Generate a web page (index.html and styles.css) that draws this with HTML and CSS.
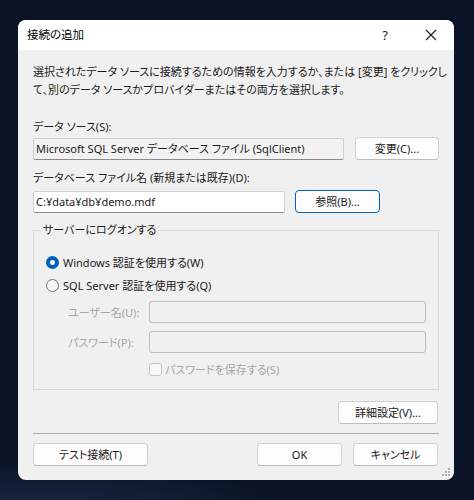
FILE: index.html
```html
<!DOCTYPE html>
<html lang="ja">
<head>
<meta charset="utf-8">
<title>接続の追加</title>
<link rel="stylesheet" href="styles.css">
</head>
<body>
<div class="dialog">
  <div class="titlebar">
    <span class="title">接続の追加</span>
    <span class="tb-btn help">?</span>
    <span class="tb-btn close"><svg width="12" height="12" viewBox="0 0 12 12"><path d="M1 1 L11 11 M11 1 L1 11" stroke="#1a1a1a" stroke-width="1.1" fill="none"/></svg></span>
  </div>
  <div class="content">
    <p class="desc">選択されたデータ ソースに接続するための情報を入力するか、または [変更] をクリックし<br>て、別のデータ ソースかプロバイダーまたはその両方を選択します。</p>
    <div class="label first">データ ソース(S):</div>
    <div class="row row-source">
      <div class="field readonly">Microsoft SQL Server データベース ファイル (SqlClient)</div>
      <button class="btn btn-change">変更(C)...</button>
    </div>
    <div class="label second">データベース ファイル名 (新規または既存)(D):</div>
    <div class="row row-file">
      <div class="field input">C:¥data¥db¥demo.mdf</div>
      <button class="btn btn-browse focus">参照(B)...</button>
    </div>
    <fieldset class="group">
      <legend>サーバーにログオンする</legend>
      <div class="radio-row r-first"><span class="radio checked"></span><span>Windows 認証を使用する(W)</span></div>
      <div class="radio-row r-second"><span class="radio"></span><span>SQL Server 認証を使用する(Q)</span></div>
      <div class="cred-row user"><span class="cred-label">ユーザー名(U):</span><div class="field disabled"></div></div>
      <div class="cred-row pass"><span class="cred-label">パスワード(P):</span><div class="field disabled"></div></div>
      <div class="check-row"><span class="checkbox"></span><span>パスワードを保存する(S)</span></div>
    </fieldset>
    <div class="adv-row"><button class="btn btn-adv">詳細設定(V)...</button></div>
    <div class="sep"></div>
    <div class="footer">
      <button class="btn btn-test">テスト接続(T)</button>
      <span class="spacer"></span>
      <button class="btn btn-ok">OK</button>
      <button class="btn btn-cancel">キャンセル</button>
    </div>
  </div>
  <svg class="grip" width="9" height="9" viewBox="0 0 9 9">
    <rect x="6" y="0" width="2" height="2" fill="#b4b4b4"/>
    <rect x="3" y="3" width="2" height="2" fill="#b4b4b4"/>
    <rect x="6" y="3" width="2" height="2" fill="#b4b4b4"/>
    <rect x="0" y="6" width="2" height="2" fill="#b4b4b4"/>
    <rect x="3" y="6" width="2" height="2" fill="#b4b4b4"/>
    <rect x="6" y="6" width="2" height="2" fill="#b4b4b4"/>
  </svg>
</div>
</body>
</html>
```

FILE: styles.css
```css
html, body {
  margin: 0;
  padding: 0;
}
body {
  width: 474px;
  height: 500px;
  overflow: hidden;
  background: radial-gradient(ellipse 260px 60px at 40px 520px, #1c2a44 0%, #121d33 60%, rgba(10,20,38,0) 100%), #0a1426;
  font-family: "Noto Sans", "Noto Sans CJK JP", sans-serif;
  font-feature-settings: "palt";
  font-size: 11px;
  color: #1a1a1a;
}
.dialog {
  position: relative;
  margin: 20px 0 0 18px;
  width: 436px;
  height: 460px;
  background: #f0f0f0;
  border-radius: 8px;
  overflow: hidden;
  display: flex;
  flex-direction: column;
}
.titlebar {
  height: 30px;
  background: #ffffff;
  display: flex;
  align-items: center;
  padding-left: 9px;
  flex: none;
}
.title {
  flex: 1;
  font-size: 11.5px;
  line-height: 16px;
  color: #000;
}
.tb-btn {
  width: 46px;
  height: 30px;
  display: flex;
  align-items: center;
  justify-content: center;
}
.help {
  font-size: 13px;
  color: #1a1a1a;
}
.content {
  padding: 0 15px;
  display: flex;
  flex-direction: column;
}
.desc {
  margin: 13px 0 0 0;
  line-height: 18px;
  white-space: nowrap;
}
.label {
  line-height: 16px;
  white-space: nowrap;
}
.label.first { margin-top: 20px; }
.label.second { margin-top: 10px; }
.row {
  display: flex;
  align-items: center;
}
.row-source { margin-top: 2px; }
.row-file { margin-top: 4px; }
.field {
  box-sizing: border-box;
  height: 22px;
  border: 1px solid #cfcfcf;
  border-bottom-color: #8a8a8a;
  border-radius: 2px;
  padding: 0 2px;
  line-height: 20px;
  white-space: nowrap;
  overflow: hidden;
  flex: none;
}
.field.readonly {
  width: 311px;
  background: #f2f2f2;
}
.field.input {
  width: 252px;
  background: #ffffff;
}
.field.disabled {
  width: 277px;
  height: 22px;
  background: #f0f0f0;
  border: 1px solid #bdbdbd;
  border-radius: 3px;
}
.btn {
  box-sizing: border-box;
  height: 23px;
  background: #fdfdfd;
  border: 1px solid #d2d2d2;
  border-bottom-color: #bcbcbc;
  border-radius: 4px;
  font-family: inherit;
  font-feature-settings: "palt";
  font-size: 11px;
  color: #1a1a1a;
  padding: 0;
  line-height: 20px;
  flex: none;
}
.btn.focus {
  border: 1px solid #0067c0;
}
.btn-change { width: 84px; margin-left: 11px; }
.btn-browse { width: 85px; margin-left: 10px; }
.group {
  margin: 9px 0 0 0;
  padding: 14px 12px 12px 12px;
  border: 1px solid #d9d9d9;
  border-radius: 0;
  min-width: 0;
}
.group legend {
  margin-left: -5px;
  padding: 0 2px;
  line-height: 16px;
}
.radio-row {
  display: flex;
  align-items: center;
  height: 20px;
  gap: 4px;
}
.r-second { margin-top: 3px; }
.radio {
  box-sizing: border-box;
  width: 13px;
  height: 13px;
  border-radius: 50%;
  border: 1px solid #707070;
  background: #f7f7f7;
  flex: none;
}
.radio.checked {
  border: 4px solid #005fb8;
  background: #ffffff;
}
.cred-row {
  display: flex;
  align-items: center;
  height: 22px;
}
.cred-row.user { margin-top: 6px; }
.cred-row.pass { margin-top: 8px; }
.cred-label {
  width: 103px;
  padding-left: 22px;
  box-sizing: border-box;
  flex: none;
  white-space: nowrap;
  color: #a6a6a6;
}
.check-row {
  display: flex;
  align-items: center;
  height: 16px;
  margin-top: 8px;
  padding-left: 103px;
  gap: 3px;
  color: #a6a6a6;
}
.checkbox {
  box-sizing: border-box;
  width: 13px;
  height: 13px;
  border: 1px solid #c6c6c6;
  border-radius: 3px;
  background: #f8f8f8;
  flex: none;
}
.adv-row {
  display: flex;
  justify-content: flex-end;
  margin-top: 11px;
  padding-right: 1px;
}
.btn-adv { width: 100px; }
.sep {
  margin-top: 9px;
  height: 1px;
  background: #a8a8a8;
}
.footer {
  display: flex;
  margin-top: 9px;
  padding-right: 1px;
}
.spacer { flex: 1; }
.btn-test { width: 115px; }
.btn-ok { width: 85px; }
.btn-cancel { width: 85px; margin-left: 11px; }
.grip {
  position: absolute;
  right: 3px;
  bottom: 3px;
}
```
